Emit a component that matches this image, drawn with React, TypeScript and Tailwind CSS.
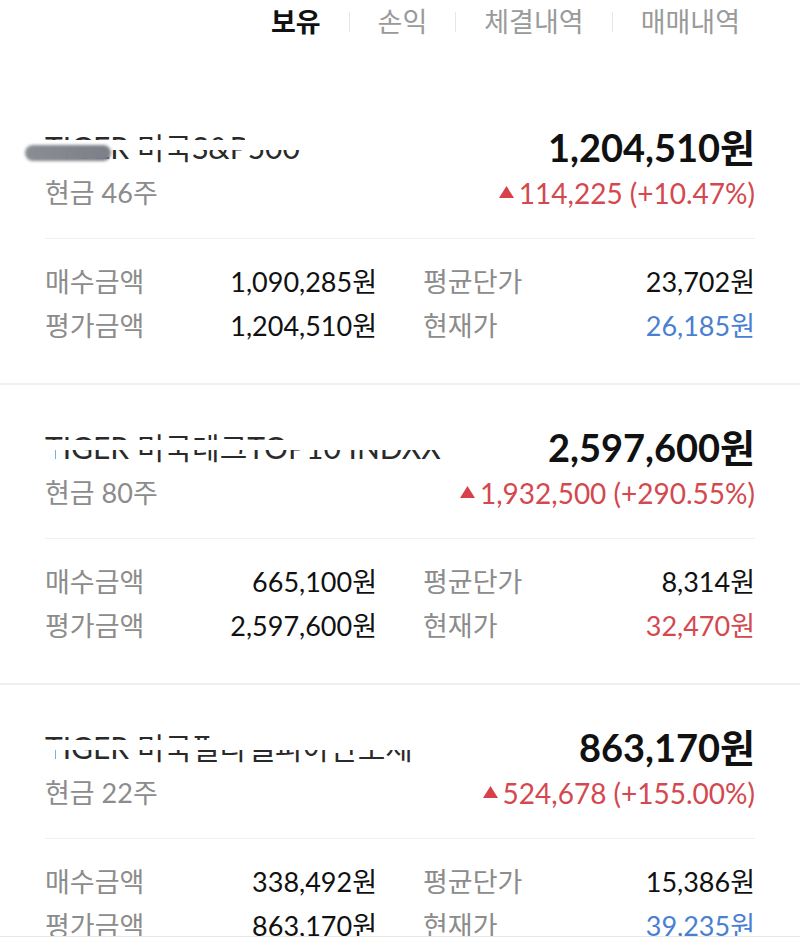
import React from "react";

interface Holding {
  name: string;
  qty: number;
  amount: string;
  change: string;
  rate: string;
  buy: string;
  evalAmount: string;
  avg: string;
  price: string;
  priceUp: boolean;
  split: number;
  smudge?: boolean;
}

const holdings: Holding[] = [
  {
    name: "TIGER 미국S&P500",
    qty: 46,
    amount: "1,204,510원",
    change: "114,225",
    rate: "(+10.47%)",
    buy: "1,090,285원",
    evalAmount: "1,204,510원",
    avg: "23,702원",
    price: "26,185원",
    priceUp: false,
    split: 200,
    smudge: true,
  },
  {
    name: "TIGER 미국테크TOP10 INDXX",
    qty: 80,
    amount: "2,597,600원",
    change: "1,932,500",
    rate: "(+290.55%)",
    buy: "665,100원",
    evalAmount: "2,597,600원",
    avg: "8,314원",
    price: "32,470원",
    priceUp: true,
    split: 245,
  },
  {
    name: "TIGER 미국필라델피아반도체",
    qty: 22,
    amount: "863,170원",
    change: "524,678",
    rate: "(+155.00%)",
    buy: "338,492원",
    evalAmount: "863,170원",
    avg: "15,386원",
    price: "39,235원",
    priceUp: false,
    split: 165,
  },
];

const tabs = ["보유", "손익", "체결내역", "매매내역"];

// name is partly wiped out in the screenshot
const HiddenName = ({ text, split, smudge }: { text: string; split: number; smudge?: boolean }) => (
  <div className="relative text-[30px] leading-[44px] text-[#2a2a2a] whitespace-nowrap">
    <span>{text}</span>
    <div className="absolute left-0 right-0 top-[15px] h-[10px] bg-white" />
    <div className="absolute left-0 top-[25px] h-[19px] bg-white" style={{ width: 10 }} />
    <div className="absolute right-0 top-0 h-[16px] bg-white" style={{ left: split }} />
    {smudge && (
      <div className="absolute left-[-20px] top-[20px] h-[16px] w-[86px] rounded-full bg-gradient-to-r from-[#8a8d94] to-[#7c7f88] blur-[1.5px]" />
    )}
  </div>
);

const Cell = ({ label, value, valueClass }: { label: string; value: string; valueClass?: string }) => (
  <div className="flex justify-between items-center leading-[44px]">
    <span className="text-[#8c8c8c]">{label}</span>
    <span className={valueClass || "text-[#111]"}>{value}</span>
  </div>
);

const HoldingCard = ({ h }: { h: Holding }) => (
  <div className="px-[45px] pt-[40px] pb-[35px]">
    <div className="flex justify-between items-center h-[44px]">
      <HiddenName text={h.name} split={h.split} smudge={h.smudge} />
      <span className="text-[38px] font-bold leading-[44px] text-[#111]">{h.amount}</span>
    </div>
    <div className="mt-[4px] flex justify-between items-center h-[40px] text-[27px]">
      <span className="text-[#8c8c8c]">현금 {h.qty}주</span>
      <span className="flex items-center text-[28px] text-[#d4484f]">
        <svg width="15" height="12" viewBox="0 0 10 8" className="mr-[5px] mb-[2px]">
          <path d="M5 0 L10 8 L0 8 Z" fill="#d9414a" />
        </svg>
        {h.change} {h.rate}
      </span>
    </div>
    <div className="mt-[25px] h-px bg-[#f0f0f0]" />
    <div className="pt-[21px] grid grid-cols-2 gap-x-[46px] text-[27px]">
      <Cell label="매수금액" value={h.buy} />
      <Cell label="평균단가" value={h.avg} />
      <Cell label="평가금액" value={h.evalAmount} />
      <Cell
        label="현재가"
        value={h.price}
        valueClass={h.priceUp ? "text-[#d4484f]" : "text-[#4a7fd2]"}
      />
    </div>
  </div>
);

export default function App() {
  return (
    <div
      className="relative w-full h-[947px] overflow-hidden bg-white"
      style={{ fontFamily: 'Lato, "Noto Sans CJK KR", sans-serif' }}
    >
      <div className="flex justify-end items-center h-[44px] pr-[60px] mb-[41px] text-[27px]">
        {tabs.map((t, i) => (
          <div key={t} className="flex items-center">
            {i > 0 && <div className="w-px h-[20px] bg-[#e6e6e6] mx-[28px]" />}
            <span className={i === 0 ? "font-bold text-[#111]" : "text-[#9a9a9a]"}>{t}</span>
          </div>
        ))}
      </div>

      {holdings.map((h, i) => (
        <div key={h.name}>
          {i > 0 && <div className="h-[2px] bg-[#efefef]" />}
          <HoldingCard h={h} />
        </div>
      ))}

      <div className="absolute left-0 right-0 bottom-0 h-[11px] bg-white border-t border-[#e8e8e8]" />
    </div>
  );
}
